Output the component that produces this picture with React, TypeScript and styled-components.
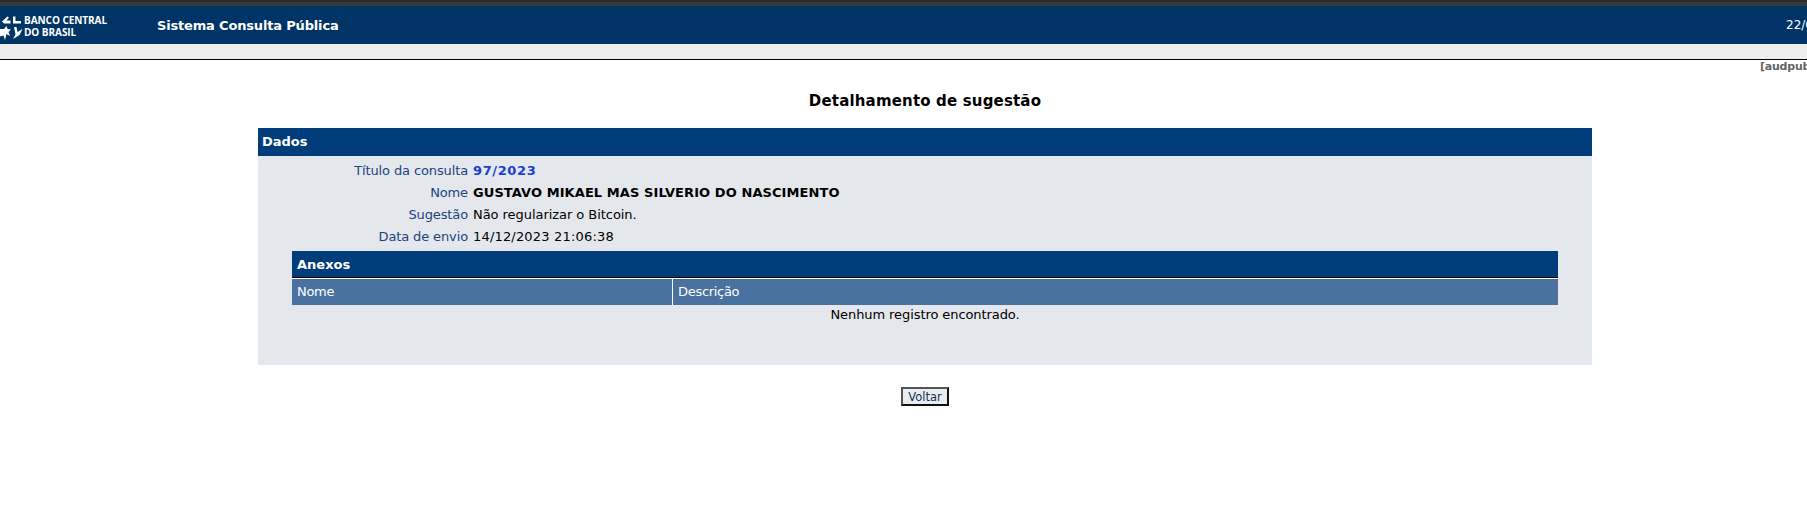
import React from "react";
import styled, { createGlobalStyle } from "styled-components";

const Global = createGlobalStyle`
  html, body { margin: 0; padding: 0; background: #fff; overflow: hidden; }
  body { font-family: "DejaVu Sans", Verdana, sans-serif; font-size: 12px; color: #000; }
  #root { width: 1807px; height: 525px; overflow: hidden; }
`;

const Page = styled.div`
  width: 1850px;
`;

const TopStrip = styled.div`
  height: 6px;
  background: #3a3a3a;
  border-top: 2px solid #2a2a2a;
  box-sizing: border-box;
`;

const Header = styled.header`
  height: 38px;
  background: #003366;
  display: flex;
  align-items: center;
  color: #fff;
`;

const Logo = styled.div`
  width: 157px;
  display: flex;
  align-items: center;
  gap: 1px;
  flex: none;
`;

const LogoMark = styled.svg`
  flex: none;
  margin-top: 6px;
`;

const LogoText = styled.div`
  font-family: "Open Sans", sans-serif;
  font-weight: 700;
  font-size: 10px;
  line-height: 11.5px;
  letter-spacing: -0.05px;
  color: #fff;
  white-space: nowrap;
  margin-top: 3px;
`;

const SystemName = styled.div`
  font-size: 13px;
  font-weight: 700;
  letter-spacing: -0.17px;
`;

const HeaderDate = styled.div`
  margin-left: auto;
  width: 64px;
  font-size: 12px;
`;

const GrayBar = styled.div`
  height: 15px;
  background: #eeeeee;
  border-bottom: 1px solid #000;
`;

const UserLine = styled.div`
  height: 14px;
  text-align: right;
  font-size: 11px;
  font-weight: 700;
  color: #666;
  line-height: 14px;
  padding-right: 20px;
  white-space: nowrap;
  letter-spacing: -0.2px;
`;

const Title = styled.h1`
  margin: 12px 0 0;
  height: 42px;
  font-size: 15px;
  line-height: 30px;
  font-weight: 700;
  letter-spacing: 0.17px;
  text-align: center;
  color: #000;
`;

const Panel = styled.section`
  width: 1334px;
  margin: 0 auto;
  background: #e4e7ec;
  height: 237px;
`;

const PanelHead = styled.div`
  height: 28px;
  background: #003d7a;
  color: #fff;
  font-size: 13px;
  font-weight: 700;
  line-height: 28px;
  padding-left: 4px;
`;

const Fields = styled.div`
  padding-top: 4px;
`;

const FieldRow = styled.div`
  display: grid;
  grid-template-columns: 210px 1fr;
  column-gap: 5px;
  height: 22px;
  line-height: 22px;
  font-size: 13px;
`;

const Label = styled.div`
  text-align: right;
  color: #1a4480;
  letter-spacing: -0.12px;
`;

const toneSpacing = { link: "0.62px", strong: "0.08px", date: "0.18px", plain: "-0.05px" };

const Value = styled.div<{ $tone: "link" | "strong" | "date" | "plain" }>`
  color: ${(p) => (p.$tone === "link" ? "#1a3fd0" : "#000")};
  font-weight: ${(p) => (p.$tone === "link" || p.$tone === "strong" ? 700 : 400)};
  letter-spacing: ${(p) => toneSpacing[p.$tone]};
`;

const Inner = styled.div`
  width: 1266px;
  margin: 3px auto 0;
`;

const InnerHead = styled.div`
  height: 26px;
  background: #003d7a;
  color: #fff;
  font-size: 13px;
  font-weight: 700;
  line-height: 27px;
  padding-left: 5px;
  border-bottom: 1px solid #000;
`;

const Columns = styled.div`
  display: grid;
  grid-template-columns: 380px 1fr;
  border-top: 1px solid #fff;
  background: #4a72a0;
  height: 26px;
`;

const Column = styled.div<{ $divided?: boolean }>`
  color: #fff;
  font-size: 13px;
  line-height: 26px;
  letter-spacing: -0.3px;
  padding-left: 5px;
  border-left: ${(p) => (p.$divided ? "1px solid #fff" : "none")};
`;

const Empty = styled.div`
  text-align: center;
  font-size: 13px;
  line-height: 20px;
  letter-spacing: -0.08px;
`;

const Actions = styled.div`
  display: flex;
  justify-content: center;
  margin-top: 22px;
`;

const BackButton = styled.button`
  width: 48px;
  height: 19px;
  padding: 0;
  box-sizing: border-box;
  background: #e9edf2;
  color: #16304f;
  font-family: "DejaVu Sans", Verdana, sans-serif;
  font-size: 11.5px;
  border-width: 2px;
  border-style: solid;
  border-color: #555 #111 #111 #555;
`;

const BcbMark = () => (
  <LogoMark width="23" height="26" viewBox="0 0 23 26" fill="#fff" aria-hidden="true">
    <path d="M2 6.5 L7.5 1.5 L9 2.5 L6.5 5.5 L10.5 5.5 L10.5 8.5 L4 8.5 Z" />
    <path d="M13 1.5 L15.5 1.5 L15.5 6 L21 6 L21 8.5 L13 8.5 Z" />
    <path d="M0 14 L4 14 L6.5 11 L7.5 14 L11 14.5 L8.5 17 L10 21 L6.5 19 L5 25 L3.5 20.5 L0 21.5 Z" />
    <path d="M14 12 L16.5 12 L17.5 17 L22.5 14 L19.5 20 L13 24 L15.5 19.5 Z" />
  </LogoMark>
);

export default function App() {
  return (
    <>
      <Global />
      <Page>
        <TopStrip />
        <Header>
          <Logo>
            <BcbMark />
            <LogoText>
              BANCO CENTRAL
              <br />
              DO BRASIL
            </LogoText>
          </Logo>
          <SystemName>Sistema Consulta Pública</SystemName>
          <HeaderDate>22/04/2024</HeaderDate>
        </Header>
        <GrayBar />
        <UserLine>[audpub01]</UserLine>
        <Title>Detalhamento de sugestão</Title>
        <Panel>
          <PanelHead>Dados</PanelHead>
          <Fields>
            <FieldRow>
              <Label>Título da consulta</Label>
              <Value $tone="link">97/2023</Value>
            </FieldRow>
            <FieldRow>
              <Label>Nome</Label>
              <Value $tone="strong">GUSTAVO MIKAEL MAS SILVERIO DO NASCIMENTO</Value>
            </FieldRow>
            <FieldRow>
              <Label>Sugestão</Label>
              <Value $tone="plain">Não regularizar o Bitcoin.</Value>
            </FieldRow>
            <FieldRow>
              <Label>Data de envio</Label>
              <Value $tone="date">14/12/2023 21:06:38</Value>
            </FieldRow>
          </Fields>
          <Inner>
            <InnerHead>Anexos</InnerHead>
            <Columns>
              <Column>Nome</Column>
              <Column $divided>Descrição</Column>
            </Columns>
            <Empty>Nenhum registro encontrado.</Empty>
          </Inner>
        </Panel>
        <Actions>
          <BackButton>Voltar</BackButton>
        </Actions>
      </Page>
    </>
  );
}
